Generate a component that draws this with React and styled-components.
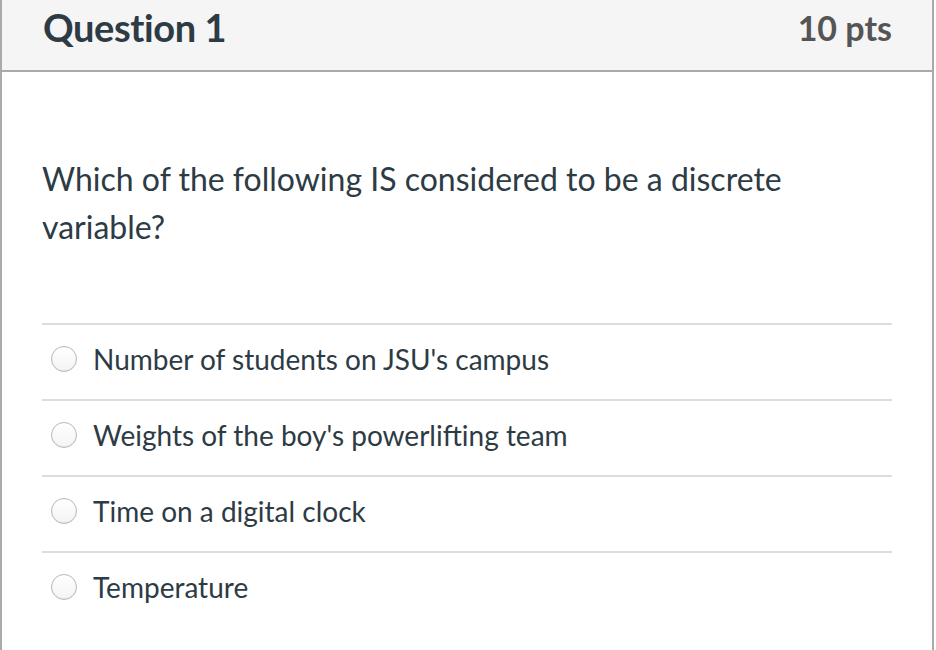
import React from "react";
import styled, { createGlobalStyle } from "styled-components";

const Global = createGlobalStyle`
  html, body { margin: 0; padding: 0; background: #fff; }
  body { font-family: Lato, "Open Sans", sans-serif; }
`;

const Card = styled.div`
  width: 934px;
  height: 650px;
  box-sizing: border-box;
  border-left: 2px solid #aaaaaa;
  border-right: 2px solid #aaaaaa;
  background: #fff;
`;

const Header = styled.div`
  height: 72px;
  box-sizing: border-box;
  background: #f5f5f5;
  border-bottom: 2px solid #aaaaaa;
  display: flex;
  align-items: center;
  justify-content: space-between;
  padding: 0 40px 16px 41px;
`;

const Title = styled.h2`
  margin: 0;
  font-size: 38px;
  font-weight: 700;
  color: #2d3b45;
  letter-spacing: -0.4px;
`;

const Points = styled.div`
  font-size: 34px;
  font-weight: 700;
  color: #555555;
`;

const Body = styled.div`
  padding: 83px 40px 0 40px;
`;

const Question = styled.p`
  margin: 0 0 72px 0;
  font-size: 32px;
  line-height: 48px;
  color: #2d3b45;
`;

const Answers = styled.div`
  display: flex;
  flex-direction: column;
`;

const Answer = styled.label`
  display: flex;
  align-items: center;
  gap: 16px;
  height: 74px;
  box-sizing: border-box;
  height: 76px;
  border-top: 2px solid #dddddd;
  padding: 0 0 7px 9px;
  font-size: 28px;
  color: #2d3b45;
`;

const Radio = styled.span`
  width: 24px;
  height: 24px;
  border-radius: 50%;
  border: 1px solid #b8b8b8;
  background: linear-gradient(#ffffff, #f4f4f4);
  box-shadow: inset 0 -1px 1px rgba(0,0,0,0.06);
  flex: none;
`;

const answers = [
  "Number of students on JSU's campus",
  "Weights of the boy's powerlifting team",
  "Time on a digital clock",
  "Temperature",
];

export default function App() {
  return (
    <>
      <Global />
      <Card>
        <Header>
          <Title>Question 1</Title>
          <Points>10 pts</Points>
        </Header>
        <Body>
          <Question>
            Which of the following IS considered to be a discrete variable?
          </Question>
          <Answers>
            {answers.map((a) => (
              <Answer key={a}>
                <Radio />
                {a}
              </Answer>
            ))}
          </Answers>
        </Body>
      </Card>
    </>
  );
}
